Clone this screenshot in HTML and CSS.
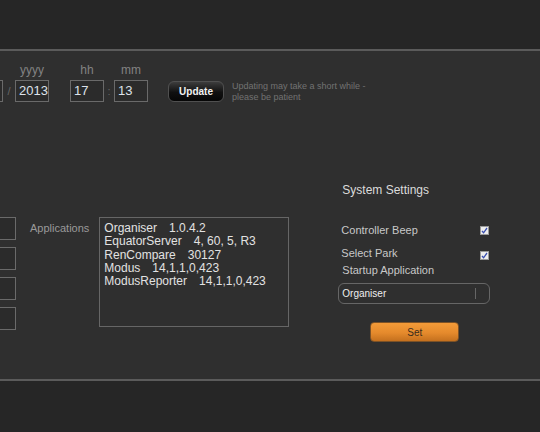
FILE: index.html
```html
<!DOCTYPE html>
<html lang="en">
    <head>
        <meta charset="UTF-8" />
        <title>System Settings</title>
        <link rel="stylesheet" href="styles.css">
    </head>
    <body>
        <div class="top-bar"></div>

        <div class="panel">
            <!-- Date / time row -->
            <div class="date-row">
                <div class="field field-cut">
                    <span class="field-label">dd</span>
                    <div class="box"></div>
                </div>
                <span class="sep">/</span>
                <div class="field">
                    <span class="field-label">yyyy</span>
                    <div class="box">2013</div>
                </div>
                <div class="field field-hh">
                    <span class="field-label">hh</span>
                    <div class="box">17</div>
                </div>
                <span class="sep sep-colon">:</span>
                <div class="field">
                    <span class="field-label">mm</span>
                    <div class="box">13</div>
                </div>
                <button class="update-btn">Update</button>
                <p class="update-note">Updating may take a short while -<br>please be patient</p>
            </div>

            <!-- Lower section -->
            <div class="lower">
                <div class="cut-inputs">
                    <div class="box"></div>
                    <div class="box"></div>
                    <div class="box"></div>
                    <div class="box"></div>
                </div>

                <div class="apps-label">Applications</div>

                <div class="apps-box">
                    <div>Organiser<span class="ver">1.0.4.2</span></div>
                    <div>EquatorServer<span class="ver">4, 60, 5, R3</span></div>
                    <div>RenCompare<span class="ver">30127</span></div>
                    <div>Modus<span class="ver">14,1,1,0,423</span></div>
                    <div>ModusReporter<span class="ver">14,1,1,0,423</span></div>
                </div>

                <div class="settings">
                    <h2>System Settings</h2>
                    <div class="setting-row row-beep">
                        <span>Controller Beep</span>
                        <span class="check">
                            <svg width="7" height="7" viewBox="0 0 7 7" fill="none" stroke="#3a4fb0" stroke-width="1.3">
                                <path d="M1 4 2.6 5.8 6 1"></path>
                            </svg>
                        </span>
                    </div>
                    <div class="setting-row row-park">
                        <span>Select Park</span>
                        <span class="check">
                            <svg width="7" height="7" viewBox="0 0 7 7" fill="none" stroke="#3a4fb0" stroke-width="1.3">
                                <path d="M1 4 2.6 5.8 6 1"></path>
                            </svg>
                        </span>
                    </div>
                    <div class="setting-label">Startup Application</div>
                    <div class="dropdown">
                        <span>Organiser</span>
                        <span class="dropdown-divider"></span>
                    </div>
                    <button class="set-btn">Set</button>
                </div>
            </div>
        </div>

        <div class="bottom-bar"></div>
    </body>
</html>
```

FILE: styles.css
```css
* {
    margin: 0;
    padding: 0;
    box-sizing: border-box;
}

body {
    background-color: #262626;
    font-family: "Liberation Sans", Arial, sans-serif;
    overflow: hidden;
}

.top-bar {
    height: 49px;
}

.panel {
    height: 332px;
    background-color: #2f2f2f;
    border-top: 2px solid #5b5b5b;
    border-bottom: 2px solid #5b5b5b;
}

/* Date row */
.date-row {
    display: flex;
    align-items: flex-end;
    padding-top: 12px;
    height: 51px;
}

.field {
    display: flex;
    flex-direction: column;
    align-items: center;
}

.field-label {
    font-size: 12px;
    line-height: 14px;
    color: #828282;
    margin-bottom: 3px;
}

.field-cut {
    margin-left: -31px;
}

.field-cut .field-label {
    visibility: hidden;
}

.field-hh {
    margin-left: 21px;
}

.box {
    width: 34px;
    height: 22px;
    border: 1px solid #6a6a6a;
    background-color: #2b2b2b;
    color: #dde2ea;
    font-size: 13px;
    line-height: 20px;
    padding-left: 3px;
    text-align: left;
}

.field .box {
    align-self: stretch;
}

.sep {
    width: 12px;
    text-align: center;
    font-size: 11px;
    line-height: 20px;
    color: #666;
    margin-bottom: 1px;
}

.sep-colon {
    width: 10px;
}

.update-btn {
    width: 56px;
    height: 21px;
    margin-left: 20px;
    margin-bottom: 0;
    border: 1px solid #505050;
    border-radius: 6px;
    background: linear-gradient(#3c3c3c, #101010 55%, #060606);
    color: #f2f2f2;
    font-family: "Liberation Sans", Arial, sans-serif;
    font-size: 10px;
    font-weight: bold;
}

.update-note {
    margin-left: 8px;
    font-size: 9px;
    line-height: 11px;
    color: #727272;
    align-self: flex-end;
    margin-bottom: -1px;
}

/* Lower section */
.lower {
    display: flex;
    align-items: flex-start;
    margin-top: 81px;
}

.cut-inputs {
    display: flex;
    flex-direction: column;
    gap: 7px;
    margin-left: -18px;
    margin-top: 34px;
}

.cut-inputs .box {
    width: 34px;
    height: 23px;
}

.apps-label {
    margin-left: 14px;
    margin-top: 39px;
    font-size: 11px;
    line-height: 13px;
    color: #9a9a9a;
}

.apps-box {
    width: 190px;
    height: 110px;
    margin-left: 10px;
    margin-top: 34px;
    padding: 4px 0 0 4px;
    border: 1px solid #666;
    color: #e2e2e2;
    font-size: 12px;
    line-height: 13.3px;
}

.ver {
    margin-left: 12px;
}

/* Settings column */
.settings {
    width: 152px;
    margin-left: 49px;
}

.settings h2 {
    font-size: 12px;
    font-weight: normal;
    line-height: 14px;
    color: #dcdcdc;
    padding-left: 4px;
}

.setting-row {
    display: flex;
    justify-content: space-between;
    align-items: center;
    padding-left: 3px;
    padding-right: 1px;
    font-size: 11px;
    line-height: 13px;
    color: #c8c8c8;
}

.row-beep {
    margin-top: 27px;
}

.row-park {
    margin-top: 10px;
}

.row-park .check {
    margin-top: 3px;
}

.check {
    width: 9px;
    height: 9px;
    background-color: #eeeeee;
    border: 1px solid #9a9a9a;
    display: flex;
    align-items: center;
    justify-content: center;
}

.setting-label {
    margin-top: 4px;
    padding-left: 4px;
    font-size: 11px;
    line-height: 13px;
    color: #c8c8c8;
}

.dropdown {
    height: 21px;
    margin-top: 6px;
    border: 1px solid #666;
    border-radius: 6px;
    display: flex;
    align-items: center;
    justify-content: space-between;
    padding-left: 3px;
    padding-right: 13px;
    font-size: 10px;
    color: #eeeeee;
}

.dropdown-divider {
    width: 1px;
    height: 11px;
    background-color: #666;
}

.set-btn {
    display: block;
    width: 89px;
    height: 20px;
    margin-top: 18px;
    margin-left: 32px;
    border: 1px solid #7d5226;
    border-radius: 4px;
    background: linear-gradient(#f49b38, #e58a2c 55%, #c4701e);
    color: #3a2c1c;
    font-family: "Liberation Sans", Arial, sans-serif;
    font-size: 10px;
}
```
